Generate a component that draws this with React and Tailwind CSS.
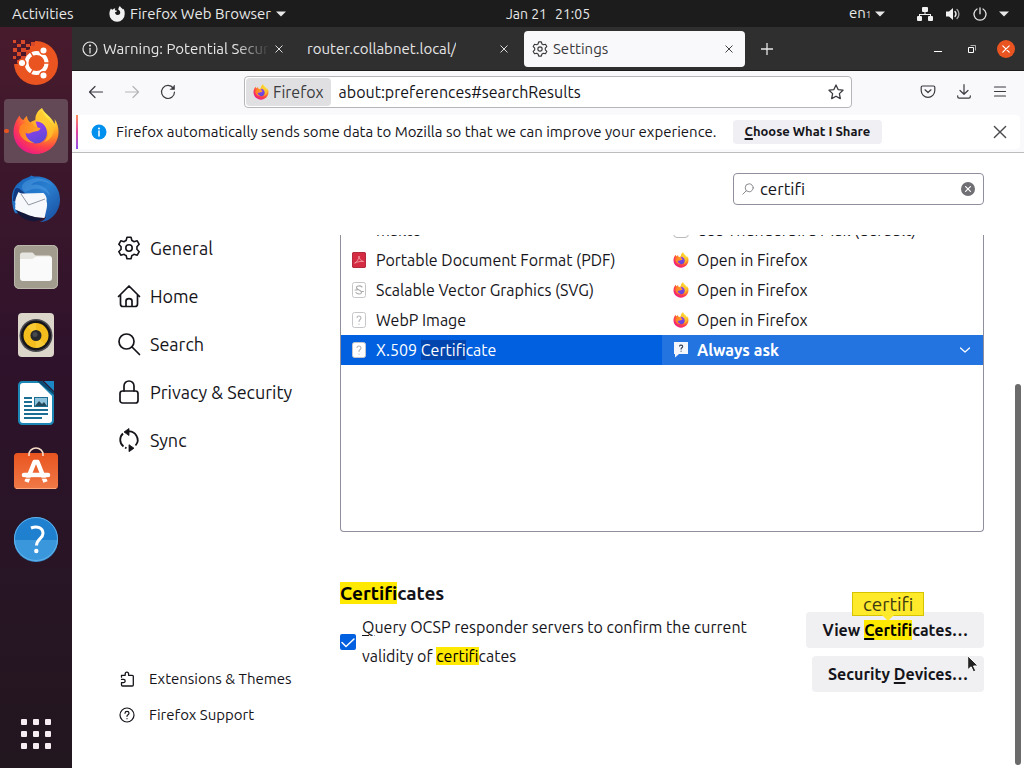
import { useId } from "react";

const line = {
  fill: "none",
  stroke: "currentColor",
  strokeLinecap: "round",
  strokeLinejoin: "round",
};

function FirefoxLogo({ className }) {
  const id = useId();
  return (
    <svg viewBox="0 0 48 48" className={className} aria-hidden="true">
      <defs>
        <radialGradient id={id + "a"} cx="0.78" cy="0.12" r="1">
          <stop offset="0" stopColor="#fff14f" />
          <stop offset="0.3" stopColor="#ffc52e" />
          <stop offset="0.52" stopColor="#ff8a24" />
          <stop offset="0.75" stopColor="#ff3f4b" />
          <stop offset="1" stopColor="#e8178c" />
        </radialGradient>
        <linearGradient id={id + "b"} x1="0.2" y1="0" x2="0.6" y2="1">
          <stop offset="0" stopColor="#a03df0" />
          <stop offset="1" stopColor="#5b48d8" />
        </linearGradient>
        <linearGradient id={id + "c"} x1="0" y1="0" x2="1" y2="0.3">
          <stop offset="0" stopColor="#ff7a22" />
          <stop offset="1" stopColor="#ffa52a" />
        </linearGradient>
      </defs>
      <path
        fill={`url(#${id}a)`}
        d="M7.500 8.500C4 13 1.500 19 1.500 25 1.500 37.500 11.500 47 24 47s22.500-10 22.500-22c0-5-1-9-4-13 .5 2 .5 3.500 0 5C40 10 33 7.500 30 1c-5 3-7 8-6.500 12-2 .4-3.600 1.200-5 2.500-2.300-1.500-3.500-4-3.500-6.500-1.500 1-2.600 2.200-3.500 4-1.800-.2-3.200-2-4-4.500z"
      />
      <path
        fill={`url(#${id}b)`}
        d="M23.500 14.500c7-.5 11.500 5 11.500 11.500 0 6-5 10.500-11 10.500S13.500 32 13.500 26.500c0-1 .2-2 .5-3l12-1.500z"
      />
      <path
        fill={`url(#${id}c)`}
        d="M8 19c3-3 7-4 10-3 2 .5 3.500 2 4.500 3.500 1.500 1 4 1.400 6 1.500-.5 2.500-3.500 3.500-6 3.500-2.500.3-3.500 2-6 2-1.500 0-2.500-.5-3-1 0 5 4 9 9 10-7 1-14-4-15.500-11z"
      />
      <path fill="#ffc52e" d="M23.500 13c5-1 11 3 12.500 9 1.200 5-.5 10-4 13 8-2 12-11 8-18-3-5-8-8-10-13-4 2-6 6-6.500 9z" opacity=".7" />
    </svg>
  );
}

function ThunderbirdLogo() {
  return (
    <svg viewBox="0 0 48 48" className="size-12" aria-hidden="true">
      <defs>
        <linearGradient id="tbBlue" x1="0" y1="0" x2="1" y2="1">
          <stop offset="0" stopColor="#1460b8" />
          <stop offset="0.5" stopColor="#2a7fd0" />
          <stop offset="1" stopColor="#184a9c" />
        </linearGradient>
      </defs>
      <path fill="url(#tbBlue)" d="M9 6C13 2.500 16 3 19.500.5c2 1.200 3 1 5 1C38 1.500 48 11.500 48 24.500c0 12-9 22.500-20 22.500 3-1 5-3 6-5L3 38C-1 30-1 18 2.500 13c2-4 4-5 6.500-7z" />
      <path fill="#5aa8ea" d="M13 7c8-6 21-5 28 4-8-6-17-6-22-1 8-2 17 2 19 11-5-7-13-9-20-6l-5 2C9 14 9 10 13 7z" opacity=".4" />
      <path fill="#123a80" d="M3 14c2-2 4-1 6 1l5 4-9 7-4 0c0-4 .500-8 2-12z" />
      <path fill="#f7f8fb" d="M6.500 17c1.500 1 3 1.500 5 1.500l20-.5c2.500 2 3.500 5 3 8 1 3 .5 6 0 8l-2 9c-10 0-22-3-29.500-9 1-1.500-.5-3 .5-5-1-3 1-8 3-12z" />
      <path fill="none" stroke="#8f95a3" strokeWidth="1" d="M9 19l7.500 11 16.500-6" />
      <path fill="#15173a" d="M4 35c8 3 17 8 27 8-2 2-7 4-12 3C12 45 7 41 4 35z" />
    </svg>
  );
}

function Swirl() {
  return (
    <svg viewBox="0 0 48 48" className="size-12" aria-hidden="true">
      <circle cx="24" cy="24" r="22" fill="#e95420" />
      <path fill="#49182a" d="M0 0h23v7h-5v4h-4v6h-5v8H0z" />
      <g fill="#d8492a">
        <rect x="1" y="1" width="3" height="3" /><rect x="9" y="1" width="4" height="4" />
        <rect x="5" y="5" width="4" height="3" /><rect x="14" y="5" width="4" height="3" />
        <rect x="19" y="3" width="4" height="4" /><rect x="1" y="9" width="4" height="4" />
        <rect x="9" y="9" width="5" height="4" /><rect x="5" y="13" width="4" height="4" />
        <rect x="14" y="12" width="4" height="4" /><rect x="1" y="17" width="3" height="3" />
        <rect x="9" y="17" width="5" height="4" /><rect x="5" y="21" width="3" height="3" />
      </g>
      <circle cx="24.500" cy="24" r="10" fill="none" stroke="#fff" strokeWidth="4" />
      <path stroke="#e95420" strokeWidth="1.500" d="M32 24h6M21 17.500l-4-7M21 30.500l-4 7" />
      <g fill="#fff" stroke="#e95420" strokeWidth="1.500">
        <circle cx="10" cy="24" r="3.800" />
        <circle cx="31.500" cy="11.500" r="3.800" />
        <circle cx="31.500" cy="36.500" r="3.800" />
      </g>
    </svg>
  );
}

function FilesIcon() {
  return (
    <svg viewBox="0 0 48 48" className="size-12" aria-hidden="true">
      <rect x="2" y="2" width="44" height="44" rx="5" fill="#a29c8e" />
      <rect x="2.500" y="2.500" width="43" height="43" rx="5" fill="none" stroke="#bdb8ad" />
      <path fill="#e6e4df" d="M8 12c0-1.500 1-2.500 2.500-2.500H20c2 0 2 3 4 3h13c1.500 0 3 1 3 3V20H8z" />
      <path fill="#fafafa" d="M8 16h12c2 0 2.500-2.500 4.500-2.500H37c2 0 3 1 3 3V35c0 2-1 3-3 3H11c-2 0-3-1-3-3z" />
    </svg>
  );
}

function MusicIcon() {
  return (
    <svg viewBox="0 0 48 48" className="size-12" aria-hidden="true">
      <rect x="6" y="2" width="36" height="44" rx="4" fill="#dcd5ca" />
      <circle cx="24" cy="24.500" r="16.500" fill="#4a4a50" />
      <circle cx="24" cy="24.500" r="15" fill="#15151a" />
      <circle cx="24" cy="24.500" r="12.500" fill="#f2bd1d" />
      <path fill="#fbd84b" d="M24 24.500L15 15.800a12.500 12.500 0 0 1 9-3.800zM24 24.500l9 8.700a12.500 12.500 0 0 1-9 3.800z" opacity=".5" />
      <circle cx="24" cy="24.500" r="5.500" fill="#26282c" />
      <circle cx="23" cy="23.500" r="2.500" fill="#46494e" />
    </svg>
  );
}

function WriterIcon() {
  return (
    <svg viewBox="0 0 48 48" className="size-12" aria-hidden="true">
      <path fill="#1c87b4" d="M10 2h20l12 12v28c0 2-2 4-4 4H10c-2 0-4-2-4-4V6c0-2 2-4 4-4z" />
      <path fill="#fff" d="M11 4h16l13 13v24c0 2-1 3-3 3H11c-2 0-3-1-3-3V7c0-2 1-3 3-3z" />
      <path fill="#0b4a73" d="M25 2h5l12 11v3z" />
      <path fill="#1c87c4" d="M32 2h10v10z" />
      <g fill="#1b6f93">
        <rect x="12" y="18" width="8" height="2" /><rect x="12" y="22" width="8" height="2" />
        <rect x="12" y="26" width="8" height="2" /><rect x="12" y="30" width="24" height="2" />
        <rect x="12" y="34" width="24" height="2" /><rect x="12" y="38" width="18" height="2" />
        <rect x="22" y="18" width="14" height="10" />
      </g>
      <rect x="23" y="19" width="12" height="8" fill="#8fc3dc" />
      <path fill="#244a5c" d="M23 27l4-5 3 3 2-2 3 4z" />
    </svg>
  );
}

function SoftwareIcon() {
  return (
    <svg viewBox="0 0 48 48" className="size-12" aria-hidden="true">
      <defs>
        <linearGradient id="bag" x1="0" y1="0" x2="0" y2="1">
          <stop offset="0" stopColor="#e9541f" />
          <stop offset="1" stopColor="#f07a48" />
        </linearGradient>
      </defs>
      <rect x="2" y="6" width="44" height="36" rx="3.500" fill="url(#bag)" />
      <path d="M4 41.500h40" stroke="#ffa57a" />
      <path d="M17 9V7.500a7 6.500 0 0 1 14 0V9" fill="none" stroke="#f8dcc8" strokeWidth="1.600" />
      <g fill="none" stroke="#fff" strokeLinejoin="round">
        <path d="M14.500 35L22.500 15h3l8 20" strokeWidth="4.500" />
        <path d="M12 28h24" strokeWidth="4.500" strokeLinecap="round" />
      </g>
      <path d="M9 31.200h30" stroke="#ec6a36" strokeWidth="1" />
    </svg>
  );
}

function HelpIcon() {
  return (
    <svg viewBox="0 0 48 48" className="size-12" aria-hidden="true">
      <circle cx="24" cy="24" r="22" fill="#1f80d0" />
      <path fill="#3b97dc" d="M2 25h44a22 22 0 0 1-44 0z" />
      <circle cx="24" cy="24" r="21.500" fill="none" stroke="#62b2ea" />
      <path d="M19 13c6-2.500 12-.5 12 5.500 0 5-6.500 5.500-6.500 12" fill="none" stroke="#fff" strokeWidth="3" />
      <circle cx="24.300" cy="36" r="2.200" fill="#fff" />
    </svg>
  );
}

function AppsIcon() {
  return (
    <svg viewBox="0 0 30 30" className="size-[30px]" fill="#f6ecf2" aria-hidden="true">
      {[0, 12, 24].map((y) => [0, 12, 24].map((x) => <rect key={x + "-" + y} x={x} y={y} width="6" height="6" rx="1" />))}
    </svg>
  );
}

function GearIcon({ className }) {
  return (
    <svg viewBox="0 0 24 24" className={className} {...line} aria-hidden="true">
      <path d="M10 1.300h4l.9 3.200c.8.300 1.400.7 2 1.200l3.300-.9 2 3.500-2.300 2.400c.1.900.1 1.700 0 2.600l2.300 2.400-2 3.500-3.300-.9c-.6.500-1.200.9-2 1.200l-.9 3.200h-4l-.9-3.200c-.8-.3-1.400-.7-2-1.200l-3.300.9-2-3.500 2.300-2.400c-.1-.9-.1-1.700 0-2.600L1.800 8.300l2-3.500 3.300.9c.6-.5 1.200-.9 2-1.200z" />
      <circle cx="12" cy="12" r="3.200" />
    </svg>
  );
}

const Cross = ({ className }) => (
  <svg viewBox="0 0 10 10" className={className} {...line} strokeWidth="1.200" aria-hidden="true">
    <path d="M1 1l8 8M9 1l-8 8" />
  </svg>
);

const Triangle = () => (
  <svg viewBox="0 0 10 6" className="h-[6px] w-[10px]" fill="currentColor" aria-hidden="true">
    <path d="M0 .5h10L5 5.500z" />
  </svg>
);

const InfoRing = () => (
  <svg viewBox="0 0 16 16" className="size-4 shrink-0" {...line} strokeWidth="1.200" aria-hidden="true">
    <circle cx="8" cy="8" r="7" />
    <path d="M8 7.300V12" />
    <circle cx="8" cy="4.600" r=".5" fill="currentColor" />
  </svg>
);

const navItems = [
  { label: "General", icon: <GearIcon className="size-6 stroke-[1.600]" /> },
  {
    label: "Home",
    icon: (
      <svg viewBox="0 0 24 24" className="size-6" {...line} strokeWidth="1.700" aria-hidden="true">
        <path d="M1.500 12.500L12 2l10.500 10.500M3.500 11v9c0 1.500 1 2.500 2.500 2.500h12c1.500 0 2.500-1 2.500-2.500v-9M9 22.500V17c0-3.300 6-3.300 6 0v5.500" />
      </svg>
    ),
  },
  {
    label: "Search",
    icon: (
      <svg viewBox="0 0 24 24" className="size-6" {...line} strokeWidth="1.700" aria-hidden="true">
        <circle cx="9.500" cy="9.500" r="7.500" />
        <path d="M15 15l7.500 7.500" />
      </svg>
    ),
  },
  {
    label: "Privacy & Security",
    icon: (
      <svg viewBox="0 0 24 24" className="size-6" {...line} strokeWidth="1.700" aria-hidden="true">
        <rect x="3" y="11" width="18" height="12" rx="2.500" />
        <path d="M7 11V6a5 5 0 0 1 10 0v5" />
      </svg>
    ),
  },
  {
    label: "Sync",
    icon: (
      <svg viewBox="0 0 24 24" className="size-6" {...line} strokeWidth="1.800" strokeLinecap="butt" aria-hidden="true">
        <path d="M6.500 18.500A8.500 8.500 0 0 1 6 5.500M10 3.700A8.500 8.500 0 0 1 18.500 17.500" />
        <path d="M14 20.300h-2M8 19.600l1.500.6" />
        <path d="M7 4l5-3.500v7zM17 20.200l-5 3.500v-7z" fill="currentColor" strokeWidth=".8" />
      </svg>
    ),
  },
];

const rows = [
  { type: "mailto", action: "Use Thunderbird Mail (default)", app: "box" },
  { type: "Portable Document Format (PDF)", kind: "pdf", action: "Open in Firefox", app: "firefox" },
  { type: "Scalable Vector Graphics (SVG)", kind: "svg", action: "Open in Firefox", app: "firefox" },
  { type: "WebP Image", kind: "file", action: "Open in Firefox", app: "firefox" },
];

function FileIcon({ kind }) {
  if (!kind) return <span className="h-4 w-[14px] shrink-0" />;
  if (kind === "pdf")
    return (
      <svg viewBox="0 0 14 16" className="h-4 w-[14px] shrink-0" aria-hidden="true">
        <rect width="14" height="16" rx="2" fill="#d52c43" />
        <rect x=".5" y=".5" width="13" height="15" rx="1.500" fill="none" stroke="#b32a3e" />
        <path d="M3 11c2-1 4-4 4-7 0 3 2 5 4.500 5.500C8 9 5 10 3 11z" {...line} stroke="#f3a9b3" strokeWidth=".8" />
      </svg>
    );
  return (
    <svg viewBox="0 0 14 16" className="h-4 w-[14px] shrink-0" aria-hidden="true">
      <rect x=".5" y=".5" width="13" height="15" rx="2" fill="#fff" stroke="#c6c6ca" />
      {kind === "svg" ? (
        <path d="M10 5c-2-2-6-1-5.500 1S10 8 9.500 10.500 5 12 4 10.500M3 8h2M10 9.500h1.500" {...line} stroke="#aaaaae" strokeWidth="1.100" />
      ) : (
        <path d="M5 5.500c.5-2 4-2 4 .5 0 1.500-2 1.500-2 3.500M7 12v.3" {...line} stroke="#b4b4b9" strokeWidth="1.100" />
      )}
    </svg>
  );
}

const dock = [
  { name: "Ubuntu", icon: <Swirl /> },
  { name: "Firefox", icon: <FirefoxLogo className="size-12" />, active: true },
  { name: "Thunderbird Mail", icon: <ThunderbirdLogo /> },
  { name: "Files", icon: <FilesIcon /> },
  { name: "Rhythmbox", icon: <MusicIcon /> },
  { name: "LibreOffice Writer", icon: <WriterIcon /> },
  { name: "Ubuntu Software", icon: <SoftwareIcon /> },
  { name: "Help", icon: <HelpIcon /> },
];

function TopBar() {
  return (
    <header className="grid h-[27px] shrink-0 grid-cols-[1fr_auto_1fr] items-center bg-[#1c1c1c] px-3 text-[15px] leading-6 text-[#e8e8e8]">
      <div className="flex items-center">
        <button className="w-[97px] text-left">Activities</button>
        <button className="flex items-center gap-[5px]">
          <svg viewBox="0 0 16 16" className="size-4" aria-hidden="true">
            <path fill="#f2f2f2" d="M2 2.500c.3.700.8 1.100 1.500 1.300.7-.8 1.700-1.400 2.800-1.600-.4.700-.5 1.300-.3 2l2 .6c0 .8-.9 1.100-1.800 1.300-.4 1.300.6 2.900 2.400 2.900 1.700 0 2.900-1.300 2.600-3-.2-1.300-1.200-2.100-2-2.600C9.500 2.600 9.700 1 11 0c.4 1.500 2 2.200 3 3.500l.5-.8c1 1.500 1.300 3.300 1.200 5.300A7.500 7.500 0 0 1 8 15.700 7.600 7.600 0 0 1 .4 8C.4 5.800 1 4 2 2.500z" />
          </svg>
          <span>Firefox Web Browser</span>
          <Triangle />
        </button>
      </div>
      <div className="flex gap-2 pl-[72px] text-sm">
        <span>Jan 21</span>
        <span>21:05</span>
      </div>
      <div className="flex items-center justify-end gap-3 pr-[3px]">
        <button className="mr-5 flex items-center gap-1">
          <span>en<small className="text-[9px]">1</small></span>
          <Triangle />
        </button>
        <svg viewBox="0 0 16 14" className="h-[14px] w-4" fill="#f2f2f2" aria-hidden="true">
          <rect x="5" y="0" width="6" height="5" rx="1" /><rect x="0" y="9" width="5" height="5" rx="1" /><rect x="11" y="9" width="5" height="5" rx="1" />
          <path d="M7.500 5h1v2H14v2h-1V8H3v1H2V7h5.500z" />
        </svg>
        <svg viewBox="0 0 16 14" className="h-[14px] w-4" fill="#f2f2f2" aria-hidden="true">
          <path d="M1 4.500h3L8 1v12L4 9.500H1z" />
          <path d="M10 4.500c1.300 1.500 1.300 3.500 0 5" {...line} stroke="#f2f2f2" strokeWidth="1.300" />
          <path d="M12 2.500c2.600 2.500 2.600 6.500 0 9" {...line} stroke="#a8a8a8" strokeWidth="1.300" />
        </svg>
        <svg viewBox="0 0 14 14" className="size-[14px]" {...line} strokeWidth="1.300" aria-hidden="true">
          <path d="M7 .8v6M4 2a6 6 0 1 0 6 0" />
        </svg>
        <Triangle />
      </div>
    </header>
  );
}

function Dock() {
  return (
    <nav aria-label="Dock" className="flex w-[72px] shrink-0 flex-col items-center bg-linear-to-b from-[#481b2c] via-[#2e122b] via-45% to-[#22161f] pt-1 pb-[19px]">
      {dock.map((d) => (
        <button
          key={d.name}
          aria-label={d.name}
          className={
            d.active
              ? "relative mb-1 grid size-16 shrink-0 place-items-center rounded bg-[#624955]"
              : "mb-1 grid size-16 shrink-0 place-items-center rounded"
          }
        >
          {d.icon}
          {d.active && <span className="absolute top-[30px] left-0 h-1 w-[5px] rounded-full bg-[#e95420]" />}
        </button>
      ))}
      <button aria-label="Show Applications" className="mt-auto">
        <AppsIcon />
      </button>
    </nav>
  );
}

function TabStrip() {
  return (
    <div className="flex h-11 shrink-0 items-center border-b border-[#1c1b1c] bg-[#302f30] pl-[2px] text-[15px] leading-6 text-[#e6e6e6]">
      <div role="tablist" className="flex min-w-0 gap-1">
        <div role="tab" className="flex h-9 w-[221px] min-w-0 items-center pl-2">
          <InfoRing />
          <span className="ml-[5px] w-[167px] overflow-hidden mask-r-from-80% whitespace-nowrap">Warning: Potential Security Risk</span>
          <button aria-label="Close tab" className="ml-auto pr-3"><Cross className="size-2" /></button>
        </div>
        <div role="tab" className="flex h-9 w-[221px] min-w-0 items-center pl-2">
          <span className="truncate">router.collabnet.local/</span>
          <button aria-label="Close tab" className="ml-auto pr-3"><Cross className="size-2" /></button>
        </div>
        <div role="tab" aria-selected="true" className="flex h-9 w-[221px] min-w-0 items-center rounded bg-[#f9f9fb] pl-2 text-[#39393d]">
          <GearIcon className="size-4 stroke-[1.700]" />
          <span className="ml-[5px] truncate">Settings</span>
          <button aria-label="Close tab" className="ml-auto pr-3"><Cross className="size-2" /></button>
        </div>
      </div>
      <button aria-label="New tab" className="ml-4">
        <svg viewBox="0 0 12 12" className="size-3" {...line} strokeWidth="1.300" aria-hidden="true"><path d="M6 0v12M0 6h12" /></svg>
      </button>
      <div className="ml-auto flex items-center pr-px">
        <button aria-label="Minimize" className="grid size-[34px] place-items-center">
          <svg viewBox="0 0 8 8" className="size-2" stroke="#fff" aria-hidden="true"><path d="M0 6.500h8" /></svg>
        </button>
        <button aria-label="Restore" className="grid size-[34px] place-items-center">
          <svg viewBox="0 0 8 8" className="size-2" fill="none" stroke="#fff" aria-hidden="true"><path d="M.5 2.500h5v5h-5z" /><path d="M2.500.5h5v5" opacity=".6" /></svg>
        </button>
        <button aria-label="Close window" className="grid size-[34px] place-items-center text-white">
          <span className="grid size-[18px] place-items-center rounded-full bg-[#e95420]">
            <Cross className="size-2 stroke-[1.500]" />
          </span>
        </button>
      </div>
    </div>
  );
}

function Toolbar() {
  return (
    <div className="flex h-[42px] shrink-0 items-center bg-[#f9f9fb] px-[6px] text-[#3b3b40]">
      <button aria-label="Back" className="grid size-9 place-items-center">
        <svg viewBox="0 0 16 16" className="size-4" {...line} strokeWidth="1.200" aria-hidden="true"><path d="M14.500 8H1.500M7 2.500L1.500 8 7 13.500" /></svg>
      </button>
      <button aria-label="Forward" disabled className="grid size-9 place-items-center text-[#b5b5b8]">
        <svg viewBox="0 0 16 16" className="size-4" {...line} strokeWidth="1.200" aria-hidden="true"><path d="M1.500 8h13M9 2.500L14.500 8 9 13.500" /></svg>
      </button>
      <button aria-label="Reload" className="grid size-9 place-items-center">
        <svg viewBox="0 0 16 16" className="size-4" {...line} strokeWidth="1.200" aria-hidden="true"><path d="M13.300 4.200A6.500 6.500 0 1 0 14.500 8" /><path d="M14.500 1.500v4h-4z" fill="currentColor" strokeWidth=".6" /></svg>
      </button>
      <div className="mx-[58px] flex h-8 min-w-0 flex-1 items-center rounded border border-[#b6b6ba] bg-white p-px pr-[7px] text-base">
        <button className="flex h-full items-center gap-1 rounded-sm bg-[#e0e0e2] px-[7px]">
          <FirefoxLogo className="size-4" />
          <span>Firefox</span>
        </button>
        <input aria-label="Address" defaultValue="about:preferences#searchResults" className="ml-2 min-w-0 flex-1 text-[#15141a] outline-none" />
        <button aria-label="Bookmark this page">
          <svg viewBox="0 0 16 16" className="size-4" {...line} strokeWidth="1.300" aria-hidden="true"><path d="M8 1l2.100 4.600 4.900.6-3.600 3.400.9 5L8 12.200 3.700 14.600l.9-5L1 6.200l4.900-.6z" /></svg>
        </button>
      </div>
      <button aria-label="Save to Pocket" className="grid size-9 place-items-center">
        <svg viewBox="0 0 16 16" className="size-4" {...line} strokeWidth="1.200" aria-hidden="true"><path d="M2.500 2h11c.8 0 1.300.5 1.300 1.300V6.500A6.800 6.800 0 0 1 1.200 6.500V3.300c0-.8.5-1.300 1.300-1.300zM5 5.800l3 2.700 3-2.700" /></svg>
      </button>
      <button aria-label="Downloads" className="grid size-9 place-items-center">
        <svg viewBox="0 0 16 16" className="size-4" {...line} strokeWidth="1.200" aria-hidden="true"><path d="M8 .7v9.500M4 6.500l4 3.800 4-3.800M1.700 11.800v1c0 .8.600 1.300 1.400 1.300h9.800c.8 0 1.400-.5 1.400-1.300v-1" /></svg>
      </button>
      <button aria-label="Application menu" className="grid size-9 place-items-center">
        <svg viewBox="0 0 16 16" className="size-4" {...line} strokeWidth="1.200" aria-hidden="true"><path d="M2.500 3h11M2.500 7.500h11M2.500 12h11" /></svg>
      </button>
    </div>
  );
}

function Notice() {
  return (
    <div className="shrink-0 border-b border-[#bdbdc0] bg-[#f9f9fb] px-1 pt-[2px] pb-[3px]">
      <div className="flex h-[34px] items-center rounded bg-white text-[15px] text-[#15141a]">
        <span className="h-full w-[2px] bg-linear-to-b from-[#ff8a50] via-[#e0409c] to-[#8f4be8]" />
        <svg viewBox="0 0 16 16" className="ml-[13px] size-4 shrink-0" aria-hidden="true">
          <circle cx="8" cy="8" r="7.500" fill="#0090ed" />
          <path d="M8 7v5" stroke="#fff" strokeWidth="1.500" strokeLinecap="round" /><circle cx="8" cy="4.500" r="1" fill="#fff" />
        </svg>
        <p className="ml-[9px] truncate">Firefox automatically sends some data to Mozilla so that we can improve your experience.</p>
        <button className="ml-4 h-6 rounded bg-[#f0f0f4] px-3 text-[13px] font-bold whitespace-nowrap">
          <u className="decoration-2 underline-offset-2">C</u>hoose What I Share
        </button>
        <button aria-label="Dismiss" className="mr-[13px] ml-auto text-[#4a4a4f]"><Cross className="size-[14px] stroke-1" /></button>
      </div>
    </div>
  );
}

function Sidebar() {
  return (
    <nav aria-label="Settings categories" className="flex w-[268px] shrink-0 flex-col pt-[71px] pb-[35px] pl-[45px] text-[#15141a]">
      {navItems.map((n) => (
        <a key={n.label} href="#category" className="flex h-12 items-center gap-[9px] text-lg leading-6">
          {n.icon}
          {n.label}
        </a>
      ))}
      <a href="#addons" className="mt-auto flex h-9 items-center gap-[14px] pl-[2px] text-[15px]">
        <svg viewBox="0 0 16 16" className="size-4" {...line} strokeWidth="1.300" aria-hidden="true">
          <path d="M2.500 6.200V4.300h3.700V3c0-2.600 3.400-2.600 3.400 0v1.300h3.700c.7 0 1 .3 1 1v8.700c0 .7-.3 1-1 1H3.500c-.7 0-1-.3-1-1v-2.300h2c2.200 0 2.200-3.300 0-3.300H2.500" />
        </svg>
        Extensions &amp; Themes
      </a>
      <a href="#support" className="flex h-9 items-center gap-[14px] pl-[2px] text-[15px]">
        <svg viewBox="0 0 16 16" className="size-4" {...line} strokeWidth="1.200" aria-hidden="true">
          <circle cx="8" cy="8" r="7" /><path d="M6 6.200c.2-2.400 4-2.400 4 0C10 7.700 8 7.700 8 9.300M8 11.600v.1" />
        </svg>
        Firefox Support
      </a>
    </nav>
  );
}

function HandlersTable() {
  return (
    <div className="-mt-5 min-h-[317px] rounded border border-t-0 border-[#8f8f9d] bg-white">
      <table aria-label="Applications" className="w-full table-fixed text-left text-base whitespace-nowrap">
        <tbody>
          {rows.map((r) => (
            <tr key={r.type} className="h-[30px]">
              <td className="p-0">
                <div className="flex items-center gap-[10px] pl-[11px]"><FileIcon kind={r.kind} />{r.type}</div>
              </td>
              <td className="p-0">
                <div className="flex items-center gap-2 pl-[11px]">
                  {r.app === "firefox" ? <FirefoxLogo className="size-4" /> : <span className="size-4 rounded-sm border border-[#b9b9bd]" />}
                  {r.action}
                </div>
              </td>
            </tr>
          ))}
          <tr className="h-[30px] bg-[#0060df] text-white">
            <td className="p-0">
              <div className="flex items-center gap-[10px] pl-[11px]">
                <FileIcon kind="file" />
                <span>X.509 <mark className="bg-[#0245ad] py-px text-white">Certifi</mark>cate</span>
              </div>
            </td>
            <td className="bg-[#2374e1] p-0">
              <div className="flex items-center gap-2 pr-3 pl-[11px]">
                <svg viewBox="0 0 16 16" className="size-4 shrink-0" aria-hidden="true">
                  <path fill="#f4f6fb" d="M1 0h14v12H6l-4 3.500V12H1z" />
                  <path d="M6.500 4.100c.5-1.500 3.200-1.300 3.200.4 0 1.300-1.600 1.300-1.600 2.600M8.100 9v.2" {...line} stroke="#33415e" strokeWidth="1.100" />
                </svg>
                <select aria-label="Action" className="min-w-0 flex-1 appearance-none font-bold outline-none">
                  <option>Always ask</option>
                </select>
                <svg viewBox="0 0 12 8" className="h-2 w-3" {...line} strokeWidth="1.200" aria-hidden="true"><path d="M1.500 2L6 6l4.500-4" /></svg>
              </div>
            </td>
          </tr>
        </tbody>
      </table>
    </div>
  );
}

function Certificates() {
  return (
    <section className="pt-[45px]">
      <h2 className="text-[19px] leading-8 font-bold"><mark className="bg-[#ffe900]">Certifi</mark>cates</h2>
      <div className="flex items-start justify-between gap-4 pt-[3px]">
        <div className="flex items-center gap-[6px] pt-px">
          <span className="relative grid size-4 shrink-0 text-white">
            <input id="ocsp" type="checkbox" defaultChecked className="size-4 appearance-none rounded-xs bg-[#0060df]" />
            <svg viewBox="0 0 16 16" className="pointer-events-none absolute inset-0 size-4" {...line} strokeWidth="1.500" aria-hidden="true">
              <path d="M2 8.500l4 4 8-7.500" />
            </svg>
          </span>
          <label htmlFor="ocsp" className="max-w-[410px] text-base leading-[29px]">
            <u className="underline-offset-2">Q</u>uery OCSP responder servers to confirm the current validity of <mark className="bg-[#ffe900]">certifi</mark>cates
          </label>
        </div>
        <div className="flex shrink-0 flex-col items-end gap-2 text-base font-bold">
          <button className="h-9 rounded bg-[#f0f0f2] px-4">
            View{" "}
            <mark className="relative inline-block bg-[#ffe900] leading-5">
              <u className="decoration-2 underline-offset-2">C</u>ertifi
              <span className="absolute bottom-full left-1/2 mb-1 flex h-6 w-[72px] -translate-x-1/2 items-center justify-center border border-[#d6c400] bg-[#ffe92b] text-[19px] font-normal text-[#3e3a10]">
                certifi
                <svg viewBox="0 0 12 6" className="absolute top-full left-1/2 h-[6px] w-3 -translate-x-1/2" fill="#ffe92b" aria-hidden="true"><path d="M0 0h12L6 6z" /></svg>
              </span>
            </mark>
            cates…
          </button>
          <button className="h-9 rounded bg-[#f0f0f2] px-4">
            Security <u className="decoration-2 underline-offset-2">D</u>evices…
          </button>
        </div>
      </div>
    </section>
  );
}

function Settings() {
  return (
    <div className="relative flex min-h-0 flex-1 bg-white">
      <Sidebar />
      <main className="flex min-w-0 flex-1 flex-col pr-10 text-[#15141a]">
        <div className="flex shrink-0 justify-end pt-5 pb-[30px]">
          <div className="flex h-8 w-[251px] items-center rounded border border-[#8f8f9d] px-2">
            <svg viewBox="0 0 12 12" className="size-3 text-[#8a8a90]" {...line} aria-hidden="true"><circle cx="7.200" cy="4.800" r="4" /><path d="M4.200 7.800L.8 11.200" /></svg>
            <input aria-label="Find in Settings" defaultValue="certifi" className="ml-[6px] min-w-0 flex-1 text-[17px] outline-none" />
            <button aria-label="Clear" className="grid size-[14px] place-items-center rounded-full bg-[#6f6f74] text-white"><Cross className="size-[6px] stroke-2" /></button>
          </div>
        </div>
        <div className="min-h-0 flex-1 overflow-hidden">
          <HandlersTable />
          <Certificates />
        </div>
      </main>
      <div className="absolute right-[3px] bottom-[3px] h-[62%] w-[6px] rounded-full bg-[#6b6b6b]" />
      <svg viewBox="0 0 12 18" className="absolute right-[45px] bottom-[95px] h-[18px] w-3" aria-hidden="true">
        <path d="M.7.800v14l3.400-3 2.300 5 2.400-1.100-2.300-4.700h4.700z" fill="#222" stroke="#fff" strokeWidth="1" />
      </svg>
    </div>
  );
}

export default function App() {
  return (
    <div className="flex h-screen flex-col overflow-hidden font-['Ubuntu','Noto_Sans',sans-serif]">
      <TopBar />
      <div className="flex min-h-0 flex-1">
        <Dock />
        <div className="flex min-w-0 flex-1 flex-col">
          <TabStrip />
          <Toolbar />
          <Notice />
          <Settings />
        </div>
      </div>
    </div>
  );
}
